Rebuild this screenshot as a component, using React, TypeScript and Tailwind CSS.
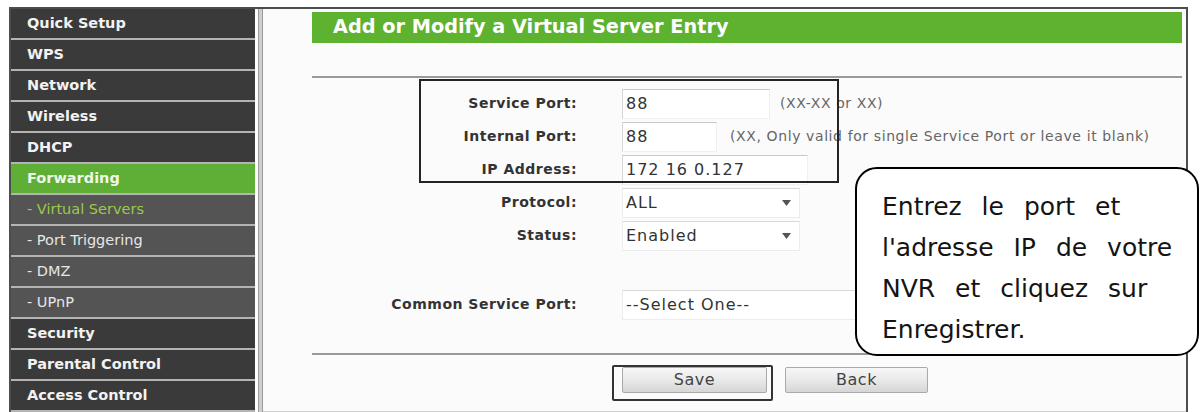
import React from "react";

const menu: { label: string; kind: "main" | "active" | "sub" | "subActive" }[] = [
  { label: "Quick Setup", kind: "main" },
  { label: "WPS", kind: "main" },
  { label: "Network", kind: "main" },
  { label: "Wireless", kind: "main" },
  { label: "DHCP", kind: "main" },
  { label: "Forwarding", kind: "active" },
  { label: "- Virtual Servers", kind: "subActive" },
  { label: "- Port Triggering", kind: "sub" },
  { label: "- DMZ", kind: "sub" },
  { label: "- UPnP", kind: "sub" },
  { label: "Security", kind: "main" },
  { label: "Parental Control", kind: "main" },
  { label: "Access Control", kind: "main" },
];

function MenuItem({ label, kind }: { label: string; kind: string }) {
  const base = "h-[31px] flex items-center pl-[16px] border-b-2 border-[#b4b4b4] text-[14.5px] whitespace-nowrap";
  if (kind === "active")
    return <div className={`${base} bg-[#5fae35] text-[#eef7e6] font-bold`}>{label}</div>;
  if (kind === "subActive")
    return <div className={`${base} bg-[#545454] text-[#9ccb48]`}>{label}</div>;
  if (kind === "sub")
    return <div className={`${base} bg-[#545454] text-[#e6e6e6]`}>{label}</div>;
  return <div className={`${base} bg-[#3a3a3a] text-[#f2f2f2] font-bold`}>{label}</div>;
}

function Arrow() {
  return (
    <svg width="9" height="6" viewBox="0 0 9 6" className="shrink-0">
      <path d="M0 0 L9 0 L4.5 6 Z" fill="#555" />
    </svg>
  );
}

function Row({ label, children }: { label: string; children: React.ReactNode }) {
  return (
    <div className="flex items-center h-[33px]">
      <div className="w-[265px] text-right font-bold text-[14px] tracking-[0.5px] text-[#333] whitespace-nowrap">{label}</div>
      <div className="ml-[45px] flex items-center">{children}</div>
    </div>
  );
}

function Field({ value, w }: { value: string; w: string }) {
  return (
    <div
      className={`${w} h-[30px] flex items-center pl-[3px] border-t border-l border-t-[#c9c9c9] border-l-[#d6d6d6] border-r border-b border-r-[#f0f0f0] border-b-[#f0f0f0] bg-white text-[16px] tracking-[1px] text-[#333]`}
    >
      {value}
    </div>
  );
}

function Select({ value, w }: { value: string; w: string }) {
  return (
    <div
      className={`${w} h-[30px] flex items-center justify-between pl-[3px] pr-[8px] border border-[#ececec] border-t-[#d8d8d8] bg-white text-[16px] tracking-[1px] text-[#333]`}
    >
      <span>{value}</span>
      <Arrow />
    </div>
  );
}

function Button({ label, w }: { label: string; w: string }) {
  return (
    <div
      className={`${w} h-[26px] flex items-center justify-center border border-[#a9a9a9] rounded-[2px] bg-gradient-to-b from-[#f7f7f7] via-[#e9e9e9] to-[#d6d6d6] text-[16px] tracking-[0.5px] text-[#444]`}
    >
      {label}
    </div>
  );
}

export default function App() {
  return (
    <div className="relative w-[1201px] h-[412px] overflow-hidden bg-white pt-[7px] pl-[9px] font-['DejaVu_Sans',Verdana,sans-serif]">
      <div className="flex h-[405px] w-[1179px] border-t-2 border-l-2 border-r-2 border-[#4d4d4d]">
        {/* left navigation */}
        <div className="w-[244px] flex flex-col bg-[#3a3a3a]">
          {menu.map((m) => (
            <MenuItem key={m.label} label={m.label} kind={m.kind} />
          ))}
        </div>
        <div className="ml-[3px] w-[5px] bg-[#cfcfcf] border-x border-[#9a9a9a]" />

        {/* main panel */}
        <div className="flex-1 bg-[#fbfbfb] pl-[49px] pr-[4px] pt-[3px] border-b border-[#d0d0d0]">
          <div className="h-[31px] bg-[#5db22f] flex items-center pl-[21px] text-white font-bold text-[19.3px] whitespace-nowrap">
            Add or Modify a Virtual Server Entry
          </div>
          <div className="mt-[33px] h-[2px] bg-[#9a9a9a]" />

          <div className="mt-[9px] flex flex-col">
            <Row label="Service Port:">
              <Field value="88" w="w-[148px]" />
              <span className="ml-[10px] text-[14px] tracking-[0.6px] text-[#666]">(XX-XX or XX)</span>
            </Row>
            <Row label="Internal Port:">
              <Field value="88" w="w-[95px]" />
              <span className="ml-[13px] text-[14px] tracking-[0.6px] text-[#666] whitespace-nowrap">
                (XX, Only valid for single Service Port or leave it blank)
              </span>
            </Row>
            <Row label="IP Address:">
              <Field value="172 16 0.127" w="w-[186px]" />
            </Row>
            <Row label="Protocol:">
              <Select value="ALL" w="w-[178px]" />
            </Row>
            <Row label="Status:">
              <Select value="Enabled" w="w-[178px]" />
            </Row>
            <div className="h-[36px]" />
            <Row label="Common Service Port:">
              <Select value="--Select One--" w="w-[300px]" />
            </Row>
          </div>

          <div className="mt-[32px] h-[2px] bg-[#9a9a9a]" />
          <div className="mt-[12px] ml-[310px] flex gap-[18px]">
            <Button label="Save" w="w-[145px]" />
            <Button label="Back" w="w-[143px]" />
          </div>
        </div>
      </div>

      {/* highlight frames */}
      <div className="absolute left-[419px] top-[79px] w-[420px] h-[104px] border-2 border-[#242424]" />
      <div className="absolute left-[612px] top-[365px] w-[161px] h-[36px] border-2 border-[#333] rounded-[2px]" />

      {/* instruction bubble */}
      <div className="absolute left-[855px] top-[167px] w-[344px] h-[189px] border-2 border-black rounded-[22px] bg-white pl-[25px] pt-[17px] text-[25px] leading-[41px] [word-spacing:12px] text-[#141414]">
        <div>Entrez le port et</div>
        <div>l'adresse IP de votre</div>
        <div>NVR et cliquez sur</div>
        <div>Enregistrer.</div>
      </div>
    </div>
  );
}
